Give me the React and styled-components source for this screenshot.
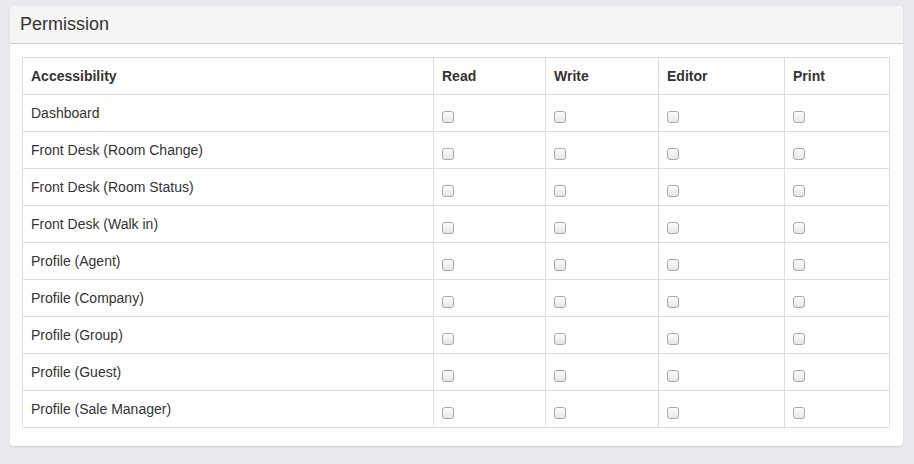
import React from "react";
import styled, { createGlobalStyle } from "styled-components";

const GlobalStyle = createGlobalStyle`
  html, body {
    margin: 0;
    padding: 0;
    background: #e9eaee;
    font-family: "Liberation Sans", Arial, sans-serif;
    color: #333;
  }
`;

const Page = styled.div`
  padding: 6px 11px 18px 10px;
`;

const Panel = styled.section`
  background: #fff;
  border-radius: 4px;
  box-shadow: 0 1px 2px rgba(0, 0, 0, 0.12);
  overflow: hidden;
`;

const PanelHeading = styled.header`
  background: #f5f5f5;
  border-bottom: 1px solid #cfcfcf;
  height: 37px;
  display: flex;
  align-items: center;
  padding: 0 10px;

  h3 {
    margin: 0;
    font-size: 18px;
    font-weight: normal;
    color: #333;
  }
`;

const PanelBody = styled.div`
  padding: 13px 13px 18px 12px;
`;

const Table = styled.table`
  width: 100%;
  border-collapse: collapse;
  table-layout: fixed;
  font-size: 14px;

  th,
  td {
    border: 1px solid #ddd;
    height: 36px;
    padding: 0 8px;
    text-align: left;
    vertical-align: middle;
  }

  th {
    font-weight: bold;
    color: #333;
  }
`;

const Check = styled.input.attrs({ type: "checkbox" })`
  appearance: none;
  -webkit-appearance: none;
  display: block;
  width: 12px;
  height: 12px;
  margin: 7px 0 0 0;
  border: 1px solid #a9a9a9;
  border-radius: 3px;
  background: linear-gradient(#fdfdfd, #e6e6e6);
  box-shadow: inset 0 1px 0 #fff;
  cursor: pointer;
  box-sizing: border-box;

  &:checked {
    background: linear-gradient(#6cb3fa, #2a83f0);
    border-color: #2a6fd0;
  }
`;

const columns = [
  { label: "Accessibility", width: 411 },
  { label: "Read", width: 112 },
  { label: "Write", width: 113 },
  { label: "Editor", width: 126 },
  { label: "Print", width: 105 },
];

const modules = [
  "Dashboard",
  "Front Desk (Room Change)",
  "Front Desk (Room Status)",
  "Front Desk (Walk in)",
  "Profile (Agent)",
  "Profile (Company)",
  "Profile (Group)",
  "Profile (Guest)",
  "Profile (Sale Manager)",
];

export default function App() {
  return (
    <>
      <GlobalStyle />
      <Page>
        <Panel>
          <PanelHeading>
            <h3>Permission</h3>
          </PanelHeading>
          <PanelBody>
            <Table>
              <colgroup>
                {columns.map((c) => (
                  <col key={c.label} style={{ width: c.width }} />
                ))}
              </colgroup>
              <thead>
                <tr>
                  {columns.map((c) => (
                    <th key={c.label}>{c.label}</th>
                  ))}
                </tr>
              </thead>
              <tbody>
                {modules.map((m) => (
                  <tr key={m}>
                    <td>{m}</td>
                    {columns.slice(1).map((c) => (
                      <td key={c.label}>
                        <Check aria-label={`${m} ${c.label}`} />
                      </td>
                    ))}
                  </tr>
                ))}
              </tbody>
            </Table>
          </PanelBody>
        </Panel>
      </Page>
    </>
  );
}
